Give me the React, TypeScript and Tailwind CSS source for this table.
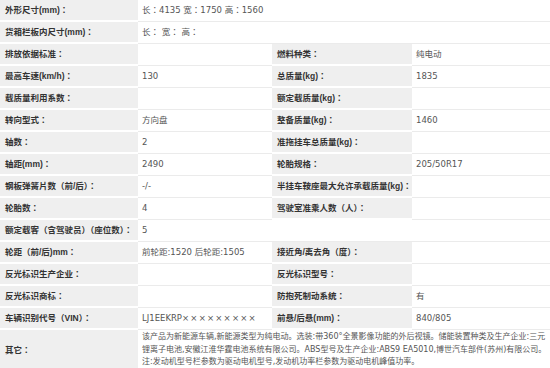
import React from "react";

type Row = {
  label: string;
  value: React.ReactNode;
  label2?: string;
  value2?: React.ReactNode;
};

const vin = (
  <>
    LJ1EEKRP<span className="tracking-[1.2px]">×××××××××</span>
  </>
);

const rows: Row[] = [
  { label: "外形尺寸(mm)：", value: "长：4135 宽：1750 高：1560" },
  { label: "货箱栏板内尺寸(mm)：", value: "长： 宽： 高：" },
  { label: "排放依据标准：", value: "", label2: "燃料种类：", value2: "纯电动" },
  { label: "最高车速(km/h)：", value: "130", label2: "总质量(kg)：", value2: "1835" },
  { label: "载质量利用系数：", value: "", label2: "额定载质量(kg)：", value2: "" },
  { label: "转向型式：", value: "方向盘", label2: "整备质量(kg)：", value2: "1460" },
  { label: "轴数：", value: "2", label2: "准拖挂车总质量(kg)：", value2: "" },
  { label: "轴距(mm)：", value: "2490", label2: "轮胎规格：", value2: "205/50R17" },
  { label: "钢板弹簧片数（前/后）：", value: "-/-", label2: "半挂车鞍座最大允许承载质量(kg)：", value2: "" },
  { label: "轮胎数：", value: "4", label2: "驾驶室准乘人数（人）：", value2: "" },
  { label: "额定载客（含驾驶员）（座位数）：", value: "5" },
  { label: "轮距（前/后)mm：", value: "前轮距:1520 后轮距:1505", label2: "接近角/离去角（度）：", value2: "" },
  { label: "反光标识生产企业：", value: "", label2: "反光标识型号：", value2: "" },
  { label: "反光标识商标：", value: "", label2: "防抱死制动系统：", value2: "有" },
  { label: "车辆识别代号（VIN）：", value: vin, label2: "前悬/后悬(mm)：", value2: "840/805" },
];

const notes = [
  "该产品为新能源车辆,新能源类型为纯电动。选装:带360°全景影像功能的外后视镜。储能装置种类及生产企业:三元",
  "锂离子电池,安徽江淮华霆电池系统有限公司。ABS型号及生产企业:ABS9 EA5010,博世汽车部件(苏州)有限公司。",
  "注:发动机型号栏参数为驱动电机型号,发动机功率栏参数为驱动电机峰值功率。",
];

function Label({ children }: { children: React.ReactNode }) {
  return (
    <div className="h-[22px] flex items-center pl-[5px] bg-[#efefef] border-b-2 border-white font-bold text-[#333] whitespace-nowrap font-['Liberation_Sans','Noto_Sans_CJK_TC',sans-serif]">
      {children}
    </div>
  );
}

function Value({ children, wide }: { children: React.ReactNode; wide?: boolean }) {
  return (
    <div
      className={`h-[22px] flex items-center pl-[4px] bg-white border-b border-[#ebebeb] text-[#555] whitespace-nowrap font-['DejaVu_Sans','Noto_Sans_CJK_TC',sans-serif] ${
        wide ? "col-span-3" : ""
      }`}
    >
      {children}
    </div>
  );
}

export default function App() {
  return (
    <div className="w-[550px] h-[368px] overflow-hidden bg-white text-[8.5px]">
      <div className="grid grid-cols-[138px_134px_140px_138px]">
        {rows.map((row, i) =>
          row.label2 === undefined ? (
            <React.Fragment key={i}>
              <Label>{row.label}</Label>
              <Value wide>{row.value}</Value>
            </React.Fragment>
          ) : (
            <React.Fragment key={i}>
              <Label>{row.label}</Label>
              <Value>{row.value}</Value>
              <Label>{row.label2}</Label>
              <Value>{row.value2}</Value>
            </React.Fragment>
          )
        )}

        <div className="h-[40px] flex items-center pl-[5px] bg-[#efefef] font-bold text-[#333] font-['Liberation_Sans','Noto_Sans_CJK_TC',sans-serif]">
          其它：
        </div>
        <div className="col-span-3 pl-[4px] pt-[1px] text-[8px] text-[#555] leading-[12.5px] whitespace-nowrap overflow-hidden font-['DejaVu_Sans','Noto_Sans_CJK_SC',sans-serif]">
          {notes.map((line) => (
            <div key={line}>{line}</div>
          ))}
        </div>
      </div>
    </div>
  );
}
